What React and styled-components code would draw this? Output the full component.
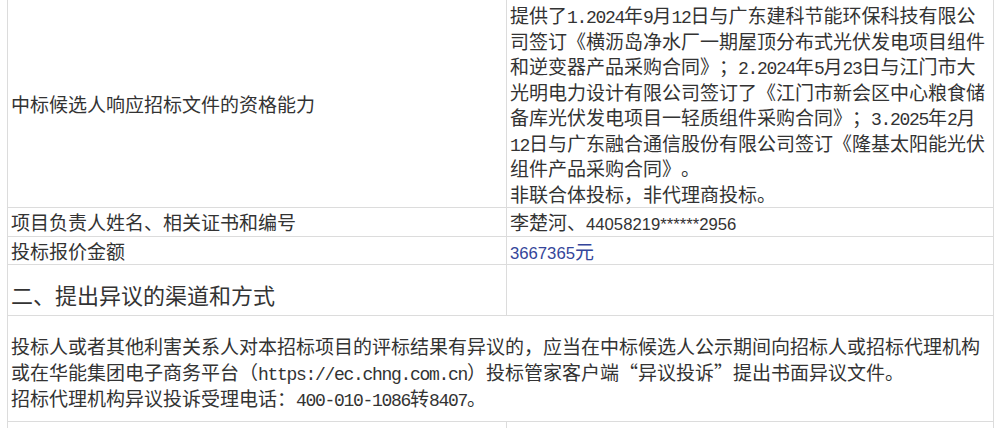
import React from "react";
import styled, { createGlobalStyle } from "styled-components";

const Global = createGlobalStyle`
  html, body {
    margin: 0;
    padding: 0;
    background: #fff;
  }
  body {
    padding: 0 6px 0 7px;
    font-family: "Noto Sans CJK SC", sans-serif;
    color: #333;
  }
`;

const Table = styled.table`
  width: 987px;
  margin-top: -1px;
  border-collapse: collapse;
  table-layout: fixed;
  font-size: 19px;
  line-height: 25.5px;
  color: #333;
  text-spacing-trim: space-all;
`;

const Cell = styled.td`
  border: 1px solid #dcdcdc;
  padding: ${(p) => p.$pad || "1px 3px"};
  vertical-align: ${(p) => p.$valign || "middle"};
  height: ${(p) => p.$h || "auto"};
  color: ${(p) => p.$color || "inherit"};
`;

const Line = styled.span`
  display: block;
  white-space: nowrap;
  height: ${(p) => p.$lh || "25.5px"};
  line-height: ${(p) => p.$lh || "25.5px"};
`;

const Half = styled.span`
  font-family: "Liberation Mono", monospace;
  font-size: 18px;
  line-height: 1;
  letter-spacing: -1.3px;
`;

const Num = styled.span`
  font-family: "Liberation Sans", sans-serif;
  font-size: 16.7px;
  line-height: 1;
`;

const Heading = styled.h2`
  margin: 14px 0 6px;
  font-size: 22px;
  line-height: 30px;
  font-weight: 400;
  color: #333;
`;

export default function App() {
  return (
    <>
      <Global />
      <Table>
        <colgroup>
          <col style={{ width: 499 }} />
          <col />
        </colgroup>
        <tbody>
          <tr>
            <Cell $pad="2px 3px 1px">中标候选人响应招标文件的资格能力</Cell>
            <Cell $pad="2px 3px 1px">
              <Line>
                提供了<Half>1.2024</Half>年<Half>9</Half>月<Half>12</Half>
                日与广东建科节能环保科技有限公
              </Line>
              <Line>司签订《横沥岛净水厂一期屋顶分布式光伏发电项目组件</Line>
              <Line>
                和逆变器产品采购合同》；<Half>2.2024</Half>年<Half>5</Half>月
                <Half>23</Half>日与江门市大
              </Line>
              <Line>光明电力设计有限公司签订了《江门市新会区中心粮食储</Line>
              <Line>
                备库光伏发电项目一轻质组件采购合同》；<Half>3.2025</Half>年
                <Half>2</Half>月
              </Line>
              <Line>
                <Half>12</Half>日与广东融合通信股份有限公司签订《隆基太阳能光伏
              </Line>
              <Line>组件产品采购合同》。</Line>
              <Line>非联合体投标，非代理商投标。</Line>
            </Cell>
          </tr>
          <tr>
            <Cell>
              <Line>项目负责人姓名、相关证书和编号</Line>
            </Cell>
            <Cell>
              <Line>
                李楚河、<Num>44058219******2956</Num>
              </Line>
            </Cell>
          </tr>
          <tr>
            <Cell>
              <Line>投标报价金额</Line>
            </Cell>
            <Cell $color="#34459a">
              <Line>
                <Num>3667365</Num>元
              </Line>
            </Cell>
          </tr>
          <tr>
            <Cell $pad="0 3px">
              <Heading>二、提出异议的渠道和方式</Heading>
            </Cell>
            <Cell />
          </tr>
          <tr>
            <Cell colSpan={2} $pad="17px 3px 10px">
              <Line $lh="26px">
                投标人或者其他利害关系人对本招标项目的评标结果有异议的，应当在中标候选人公示期间向招标人或招标代理机构
              </Line>
              <Line $lh="26px">
                或在华能集团电子商务平台（<Half>https://ec.chng.com.cn</Half>
                ）投标管家客户端“异议投诉”提出书面异议文件。
              </Line>
              <Line $lh="26px">
                招标代理机构异议投诉受理电话：<Half>400-010-1086</Half>转
                <Half>8407</Half>。
              </Line>
            </Cell>
          </tr>
          <tr>
            <Cell $h="30px" />
            <Cell $h="30px" />
          </tr>
        </tbody>
      </Table>
    </>
  );
}
